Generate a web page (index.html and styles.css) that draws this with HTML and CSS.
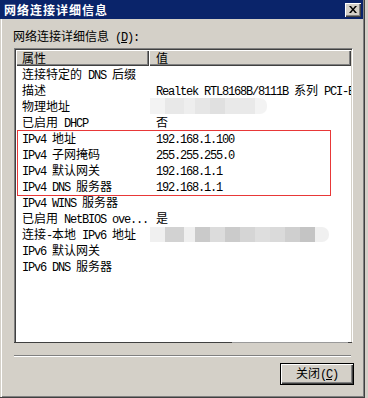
FILE: index.html
```
<!DOCTYPE html>
<html lang="zh-CN">
<head>
<meta charset="utf-8">
<title>网络连接详细信息</title>
<link rel="stylesheet" href="styles.css">
</head>
<body>
<div class="window">
  <div class="titlebar">
    <span class="title">网络连接详细信息</span>
    <span class="close"><svg width="8" height="7" viewBox="0 0 8 7"><path d="M0 0h2l2 2.5 2-2.5h2l-3 3.5 3 3.5h-2l-2-2.5-2 2.5h-2l3-3.5z" fill="#000"/></svg></span>
  </div>
  <div class="client">
    <div class="label">网络连接详细信息<span class="a"> (<u>D</u>):</span></div>
    <div class="list">
      <div class="header">
        <div class="hcell col1">属性</div>
        <div class="hcell col2">值</div>
      </div>
      <div class="rows">
        <div class="row"><div class="cell col1">连接特定的<span class="a"> DNS </span>后缀</div><div class="cell col2"></div></div>
        <div class="row"><div class="cell col1">描述</div><div class="cell col2"><span class="a">Realtek RTL8168B/8111B </span>系列<span class="a"> PCI-E Family Controller</span></div></div>
        <div class="row"><div class="cell col1">物理地址</div><div class="cell col2"><span class="blur blur1"></span></div></div>
        <div class="row"><div class="cell col1">已启用<span class="a"> DHCP</span></div><div class="cell col2">否</div></div>
        <div class="row"><div class="cell col1"><span class="a">IPv4 </span>地址</div><div class="cell col2"><span class="a">192.168.1.100</span></div></div>
        <div class="row"><div class="cell col1"><span class="a">IPv4 </span>子网掩码</div><div class="cell col2"><span class="a">255.255.255.0</span></div></div>
        <div class="row"><div class="cell col1"><span class="a">IPv4 </span>默认网关</div><div class="cell col2"><span class="a">192.168.1.1</span></div></div>
        <div class="row"><div class="cell col1"><span class="a">IPv4 DNS </span>服务器</div><div class="cell col2"><span class="a">192.168.1.1</span></div></div>
        <div class="row"><div class="cell col1"><span class="a">IPv4 WINS </span>服务器</div><div class="cell col2"></div></div>
        <div class="row"><div class="cell col1">已启用<span class="a"> NetBIOS ove...</span></div><div class="cell col2">是</div></div>
        <div class="row"><div class="cell col1">连接<span class="a">-</span>本地<span class="a"> IPv6 </span>地址</div><div class="cell col2"><span class="blur blur2"></span></div></div>
        <div class="row"><div class="cell col1"><span class="a">IPv6 </span>默认网关</div><div class="cell col2"></div></div>
        <div class="row"><div class="cell col1"><span class="a">IPv6 DNS </span>服务器</div><div class="cell col2"></div></div>
        <div class="highlight"></div>
      </div>
    </div>
    <div class="list-edge"></div>
    <div class="separator"></div>
    <div class="footer">
      <button class="btn">关闭<span class="a">(<u>C</u>)</span></button>
    </div>
  </div>
</div>
</body>
</html>
```

FILE: styles.css
```
html, body {
  margin: 0;
  padding: 0;
  background: #d4d0c8;
}
body {
  font-family: "Noto Sans CJK SC", sans-serif;
  font-size: 12px;
  color: #000;
}
.a {
  font-family: "Liberation Mono", monospace;
  letter-spacing: -1.2px;
}
.window {
  width: 365px;
  height: 398px;
  box-sizing: border-box;
  border-right: 1px solid #404040;
  border-bottom: 1px solid #404040;
  box-shadow: inset -1px -1px #808080;
  display: flex;
  flex-direction: column;
  background: #d4d0c8;
}
.titlebar {
  height: 19px;
  margin-right: 1px;
  background: #0a246a;
  display: flex;
  justify-content: space-between;
  align-items: flex-start;
  padding: 0 2px 0 4px;
}
.title {
  color: #fff;
  font-weight: bold;
  letter-spacing: 1px;
  line-height: 19px;
}
.close {
  margin-top: 3px;
  width: 16px;
  height: 14px;
  box-sizing: border-box;
  background: #d4d0c8;
  box-shadow: inset 1px 1px #fff, inset -1px -1px #404040, inset -2px -2px #808080;
  display: flex;
  align-items: center;
  justify-content: center;
  padding-bottom: 1px;
}
.close svg {
  display: block;
}
.client {
  flex: 1;
  border-left: 1px solid #d4d0c8;
  box-shadow: inset 1px 0 #fff;
  padding-left: 13px;
  display: flex;
  flex-direction: column;
  align-items: flex-start;
}
.label {
  margin: 9px 0 2px -1px;
  line-height: 16px;
}
.list {
  width: 339px;
  height: 294px;
  box-sizing: border-box;
  background: #fff;
  border-top: 1px solid #808080;
  border-left: 1px solid #808080;
  border-right: 1px solid #fff;
  box-shadow: inset 1px 1px #404040, inset -1px 0 #d4d0c8;
  padding: 1px 1px 0 1px;
  overflow: hidden;
}
.list-edge {
  width: 338px;
  height: 1px;
  background: linear-gradient(to right, #404040 0 218px, #9a9a9a 218px 334px, #404040 334px);
}
.header {
  display: flex;
  height: 16px;
}
.hcell {
  box-sizing: border-box;
  height: 16px;
  background: #d4d0c8;
  box-shadow: inset 1px 1px #fff, inset -1px -1px #404040, inset -2px -2px #808080;
  line-height: 15px;
  white-space: nowrap;
}
.col1 {
  width: 133px;
  flex: none;
  padding-left: 6px;
  box-sizing: border-box;
}
.col2 {
  flex: 1;
  min-width: 0;
  padding-left: 7px;
}
.rows {
  position: relative;
}
.row {
  display: flex;
  height: 16px;
}
.cell {
  line-height: 16px;
  white-space: nowrap;
  overflow: hidden;
}
.blur {
  display: block;
  margin-left: -6px;
  border-radius: 0 7px 7px 0;
}
.blur1 {
  width: 117px;
  height: 16px;
  background: linear-gradient(to right,
    #f3f3f3 0 15px, #e8e8e8 15px 34px, #eeeeee 34px 45px, #e6e6e6 45px 60px,
    #e0e0e0 60px 75px, #e9e9e9 75px 105px, #f3f3f3 105px);
}
.blur2 {
  width: 179px;
  height: 15px;
  margin-top: 1px;
  background: linear-gradient(to right,
    #f0f0f0 0 15px, #d2d2d2 15px 34px, #efefef 34px 45px, #cacaca 45px 60px,
    #dcdcdc 60px 75px, #cbcbcb 75px 90px, #d5d5d5 90px 105px, #dedede 105px 120px,
    #dadada 120px 135px, #cfcfcf 135px 150px, #c4c4c4 150px 165px, #f0f0f0 165px);
}
.highlight {
  position: absolute;
  left: 1px;
  top: 64px;
  width: 314px;
  height: 66px;
  box-sizing: border-box;
  border: 1px solid #e83838;
}
.separator {
  margin-top: 12px;
  width: 337px;
  height: 2px;
  box-sizing: border-box;
  border-top: 1px solid #808080;
  border-bottom: 1px solid #fff;
}
.footer {
  align-self: flex-end;
  margin: 6px 10px 0 0;
}
.btn {
  display: block;
  width: 74px;
  height: 22px;
  box-sizing: border-box;
  padding: 0;
  margin: 0;
  background: #d4d0c8;
  border: 1px solid #000;
  box-shadow: inset 1px 1px #fff, inset -1px -1px #404040, inset -2px -2px #808080;
  font-family: "Noto Sans CJK SC", sans-serif;
  font-size: 12px;
  line-height: 18px;
  color: #000;
}
```
